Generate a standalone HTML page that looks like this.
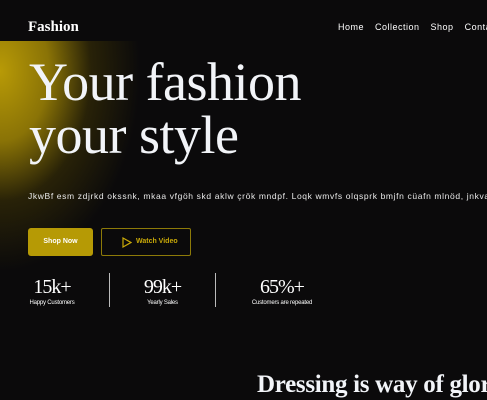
<!DOCTYPE html>
<html><head><style>
html,body{margin:0;padding:0;width:487px;height:400px;overflow:hidden;background:#0b0a0b;color:#fff;position:relative;font-family:"Liberation Sans",sans-serif}
.glow{position:absolute;left:0;top:41px;width:260px;height:240px;background:radial-gradient(ellipse 140px 200px at 0px 30px,#b89a06 0%,#8a7306 35%,rgba(60,50,5,0.6) 65%,rgba(11,10,11,0) 100%);}
.logo{position:absolute;left:28px;top:19px;font-family:"Liberation Serif",serif;font-weight:bold;font-size:15px}
.nav{position:absolute;left:338px;top:22px;font-size:9px;letter-spacing:0.5px;white-space:nowrap}
.nav span{margin-right:11px}
h1{position:absolute;left:29px;top:56px;margin:0;font-family:"Liberation Serif",serif;font-weight:normal;font-size:54px;line-height:53px;color:#f2f4f8;letter-spacing:-0.5px}
.p{position:absolute;left:28px;top:191px;font-size:8.5px;letter-spacing:0.63px;white-space:nowrap;color:#e8e8e8}
.b1{position:absolute;left:28px;top:228px;width:65px;height:28px;background:#b69a05;border-radius:3px;font-size:7px;font-weight:bold;text-align:center;line-height:28px}
.b2{position:absolute;left:101px;top:228px;width:88px;height:26px;border:1px solid #8d7a08;border-radius:2px;font-size:7px;font-weight:bold;color:#c9a908;line-height:26px}
.b2 svg{position:absolute;left:20px;top:8px}
.b2 span{position:absolute;left:34px}
.st{position:absolute;top:277px;text-align:center}
.st b{display:block;font-family:"Liberation Serif",serif;font-weight:normal;font-size:20px;line-height:20px;letter-spacing:-1px}
.st i{display:block;font-style:normal;font-size:6px;margin-top:3px;letter-spacing:-0.2px}
.dv{position:absolute;top:273px;width:1px;height:34px;background:#bbb}
h2{position:absolute;left:257px;top:371px;margin:0;font-family:"Liberation Serif",serif;font-size:25px;letter-spacing:-0.3px;white-space:nowrap;color:#f2f4f8}
</style></head><body>
<div class="glow"></div>
<div class="logo">Fashion</div>
<div class="nav"><span>Home</span><span>Collection</span><span>Shop</span><span>Contact</span></div>
<h1>Your fashion<br>your style</h1>
<div class="p">JkwBf esm zdjrkd okssnk, mkaa vfgöh skd aklw çrök mndpf. Loqk wmvfs olqsprk bmjfn cüafn mlnöd, jnkva ivgh</div>
<div class="b1">Shop Now</div>
<div class="b2"><svg width="10" height="11" viewBox="0 0 10 11"><path d="M1 1 L9 5.5 L1 10 Z" fill="none" stroke="#c9a908" stroke-width="1.2"/></svg><span>Watch Video</span></div>
<div class="st" style="left:28px;width:48px"><b>15k+</b><i>Happy Customers</i></div>
<div class="dv" style="left:109px"></div>
<div class="st" style="left:140px;width:45px"><b>99k+</b><i>Yearly Sales</i></div>
<div class="dv" style="left:215px"></div>
<div class="st" style="left:248px;width:68px"><b>65%+</b><i>Customers are repeated</i></div>
<h2>Dressing is way of glory</h2>
</body></html>
